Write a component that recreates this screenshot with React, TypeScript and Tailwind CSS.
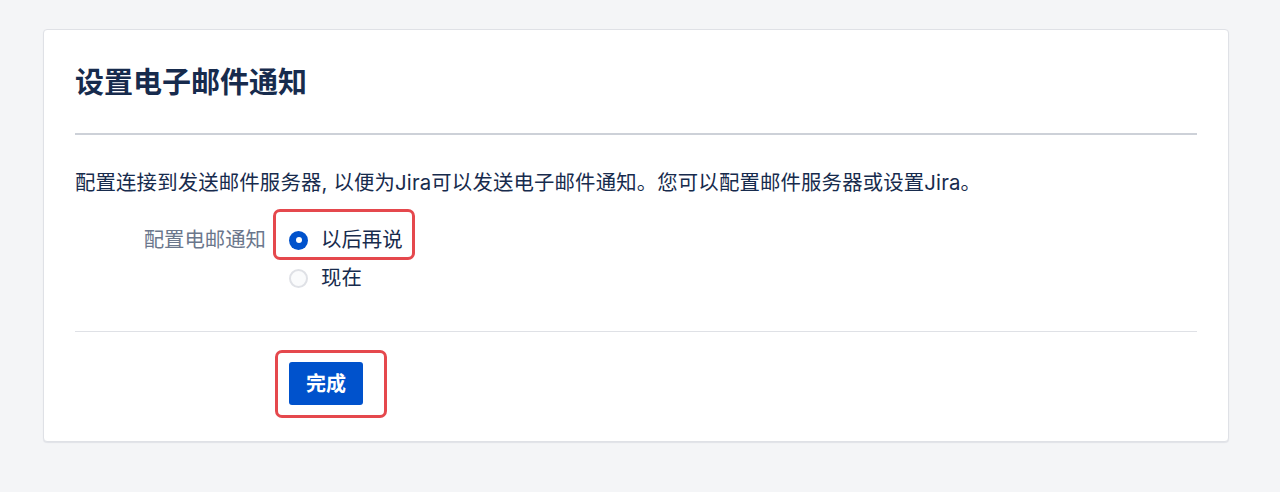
import React from "react";

const font = { fontFamily: '"Inter", "Noto Sans CJK SC", sans-serif' };

export default function App() {
  return (
    <div className="h-[492px] w-[1280px] bg-[#f4f5f7] pt-[29px] pl-[43px]" style={font}>
      <div className="w-[1186px] h-[413px] rounded-[4px] border border-[#dfe1e6] bg-white px-[31px] pt-[32px] shadow-[0_1px_1px_rgba(9,30,66,0.08)]">
        <h1 className="text-[29px] leading-[42px] font-bold text-[#172b4d]">设置电子邮件通知</h1>
        <div className="mt-[29px] h-[2px] bg-[#cdd1d8]" />
        <p className="mt-[34px] text-[20.4px] leading-[28px] tracking-[0.15px] text-[#172b4d]">
          配置连接到发送邮件服务器, 以便为Jira可以发送电子邮件通知。您可以配置邮件服务器或设置Jira。
        </p>
        <div className="mt-[24px] flex">
          <div className="w-[192px] pr-[1px] text-right text-[20.4px] leading-[38px] text-[#6b778c]">配置电邮通知</div>
          <div className="ml-[22px] flex flex-col">
            <label className="relative flex h-[38px] items-center gap-[13px]">
              <span className="pointer-events-none absolute -left-[16px] -right-[12px] top-[-12px] bottom-[-1px] rounded-[7px] border-[3px] border-[#e5484d]" />
              <span className="flex h-[19px] w-[19px] items-center justify-center rounded-full bg-[#0052cc]">
                <span className="h-[6px] w-[6px] rounded-full bg-white" />
              </span>
              <span className="text-[20.4px] text-[#172b4d]">以后再说</span>
            </label>
            <label className="flex h-[38px] items-center gap-[13px]">
              <span className="h-[19px] w-[19px] rounded-full border-2 border-[#dfe1e6] bg-[#fafbfc]" />
              <span className="text-[20.4px] text-[#172b4d]">现在</span>
            </label>
          </div>
        </div>
        <div className="mt-[34px] h-px bg-[#dfe1e6]" />
        <div className="mt-[30px] flex pl-[214px]">
          <div className="relative">
            <span className="pointer-events-none absolute -left-[14px] -right-[24px] -top-[12px] -bottom-[13px] rounded-[7px] border-[3px] border-[#e5484d]" />
            <button className="h-[43px] rounded-[3px] bg-[#0052cc] px-[17px] text-[20px] font-bold text-white">完成</button>
          </div>
        </div>
      </div>
    </div>
  );
}
